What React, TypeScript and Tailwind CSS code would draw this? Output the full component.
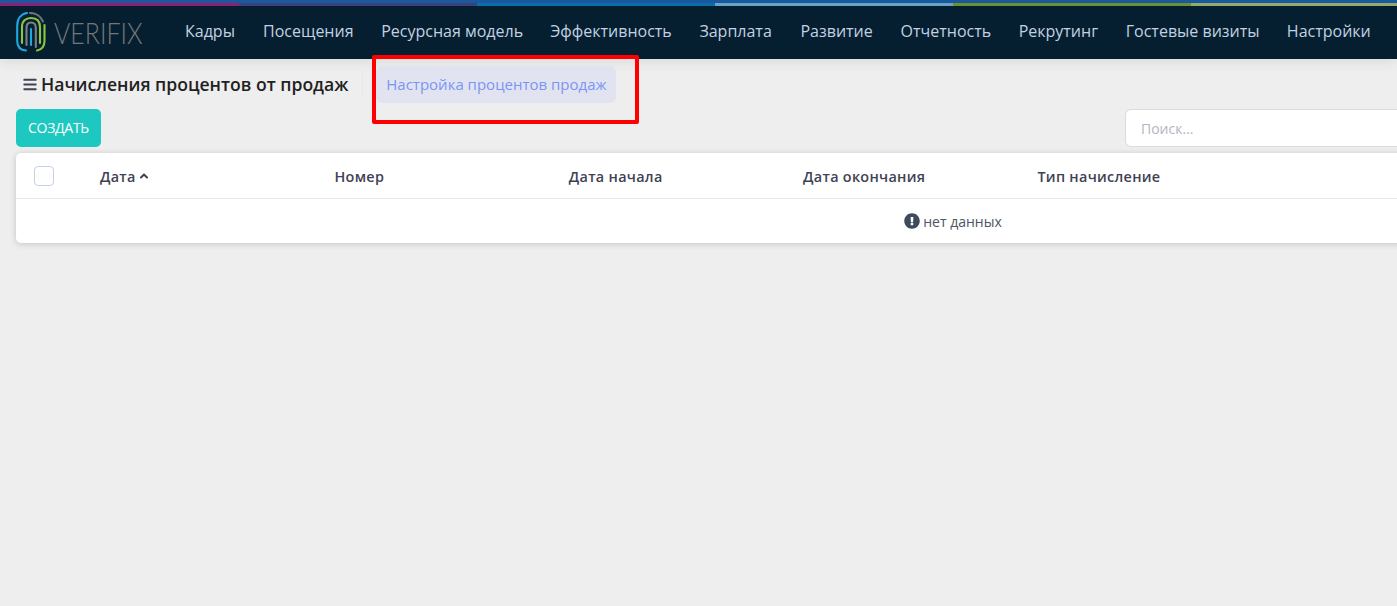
import React from "react";
import { ChevronUp } from "lucide-react";
import { FaBars, FaExclamationCircle } from "react-icons/fa";

const navItems = [
  { name: "Кадры", width: "w-[50px]" },
  { name: "Посещения", width: "w-[90px]" },
  { name: "Ресурсная модель", width: "w-[141px]" },
  { name: "Эффективность", width: "w-[121px]" },
  { name: "Зарплата", width: "w-[73px]" },
  { name: "Развитие", width: "w-[72px]" },
  { name: "Отчетность", width: "w-[90px]" },
  { name: "Рекрутинг", width: "w-[79px]" },
  { name: "Гостевые визиты", width: "w-[133px]" },
  { name: "Настройки", width: "w-[82px]" },
];

const columns = ["Номер", "Дата начала", "Дата окончания", "Тип начисление"];

const Logo = () => (
  <svg width="30" height="40" viewBox="0 0 30 40" fill="none" strokeWidth="2.1" strokeLinecap="round" className="mb-[1px]">
    {/* outer ring */}
    <path d="M10 38.5C4 38 1.2 34 1.2 29V14C1.2 7 5 2 11 1" stroke="#1fa8e0" />
    <path d="M14 1C20 1 25 4.5 27 9.5" stroke="#6f7376" />
    <path d="M28.5 13V29C28.5 34 26 37.5 21 38.5" stroke="#8cc63f" />
    {/* inner arches */}
    <path d="M6 31V15C6 9 9.5 6 15 6C20.5 6 24 9 24 15V31" stroke="#8cc63f" />
    <path d="M10.5 33V16C10.5 12 12 10.5 15 10.5C18 10.5 19.8 12 19.8 16V35" stroke="#7c8083" />
    <path d="M15 33V17" stroke="#1fa8e0" />
  </svg>
);

const App = () => {
  return (
    <div className="relative h-screen w-full overflow-hidden bg-[#eeeeee] font-['Open_Sans',sans-serif]">
      {/* top colour stripes */}
      <div className="h-[3px] bg-[#1b5a9f]" />
      <div className="flex h-[3px]">
        <div className="w-[239px] bg-[#8c1f78]" />
        <div className="w-[238px] bg-[#3a4079]" />
        <div className="w-[238px] bg-[#0a6fa9]" />
        <div className="w-[238px] bg-[#6ba3c6]" />
        <div className="w-[238px] bg-[#6d9130]" />
        <div className="flex-1 bg-[#93a86b]" />
      </div>

      <header className="flex h-[53px] items-center bg-[#051f30] pl-4 shadow-[0_3px_12px_rgba(0,0,0,0.08)]">
        <Logo />
        <span className="ml-[8px] w-[89px] origin-left scale-x-[0.86] font-['Lato',sans-serif] text-[29px] leading-none font-light text-[#74777a]">
          VERIFIX
        </span>
        <nav className="ml-[42px] flex items-center gap-[28.1px] pb-[3px]">
          {navItems.map((item) => (
            <a key={item.name} className={`${item.width} text-[16px] whitespace-nowrap text-[#c3d1e0]`}>
              {item.name}
            </a>
          ))}
        </nav>
      </header>

      <div className="flex h-[50px] items-center pl-[23px]">
        <FaBars className="h-[15px] w-[14px] text-[#3f4254]" />
        <h1 className="ml-1 text-[17.6px] font-semibold whitespace-nowrap text-[#212121]">
          Начисления процентов от продаж
        </h1>
        <div className="ml-[14px] h-[26px] w-px bg-[#e6e8ee]" />
        <a className="mt-[1px] ml-[13px] flex h-[37px] w-[240px] items-center justify-center rounded-md bg-[#e1e4f0] text-[15px] whitespace-nowrap text-[#7c94f4]">
          Настройка процентов продаж
        </a>
      </div>

      <div className="flex w-[1525px] items-center justify-between pl-4">
        <button className="h-[38px] w-[85px] rounded-[5px] bg-[#1cc8bf] pb-[2px] text-[14px] tracking-[-0.3px] text-white">
          СОЗДАТЬ
        </button>
        <div className="flex h-[38px] w-[400px] items-center rounded-md border border-[#d8dbe3] bg-white pl-[15px] text-[14px] text-[#b5b5c3]">
          Поиск...
        </div>
      </div>

      <div className="mt-[6px] ml-4 w-[1874px] rounded-[5px] bg-white shadow-[0_1px_6px_rgba(0,0,0,0.18)]">
        <div className="flex h-[46px] items-center border-b border-[#e4e6ef] pt-[2px] text-[14.4px] font-semibold tracking-[0.3px] text-[#3f4254]">
          <div className="mt-[-2px] w-[84px] pl-[18px]">
            <div className="h-5 w-5 rounded border border-[#c5cfe6] bg-white" />
          </div>
          <div className="flex w-[234.5px] items-center gap-[2px]">
            Дата
            <ChevronUp className="h-3 w-3" strokeWidth={4} />
          </div>
          {columns.map((col) => (
            <div key={col} className="w-[234.3px]">
              {col}
            </div>
          ))}
        </div>
        <div className="flex h-[44px] items-center justify-center gap-[3px] text-[14px] text-[#4b5563]">
          <FaExclamationCircle className="h-4 w-4 text-[#3f4a5e]" />
          нет данных
        </div>
      </div>

      {/* red annotation drawn over the screenshot */}
      <div className="absolute top-[55px] left-[372px] h-[69px] w-[267px] rounded-[2px] border-4 border-[#ff0000]" />
    </div>
  );
};

export default App;
